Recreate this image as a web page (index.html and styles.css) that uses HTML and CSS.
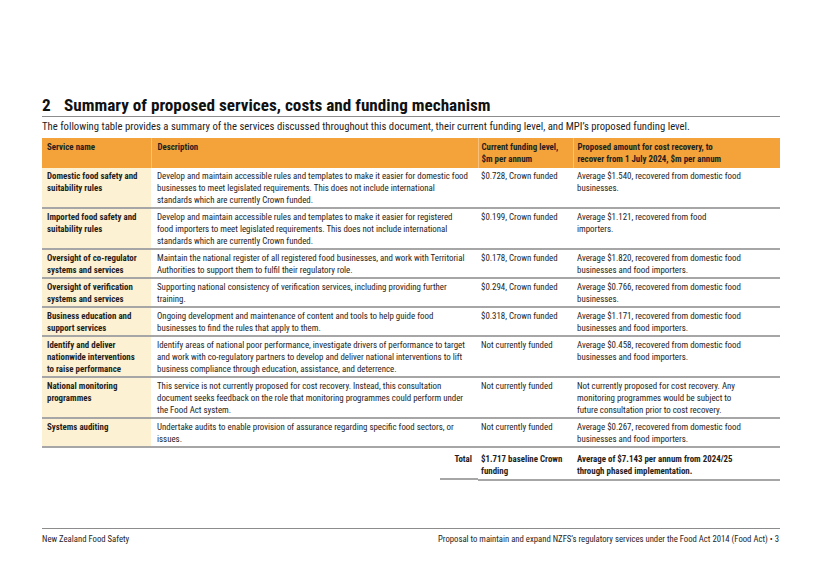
FILE: index.html
```html
<!DOCTYPE html>
<html>
<head>
<meta charset="utf-8">
<link rel="stylesheet" href="styles.css">
</head>
<body>
<div class="page">
  <h1 class="title"><span class="num">2</span>Summary of proposed services, costs and funding mechanism</h1>
  <p class="intro">The following table provides a summary of the services discussed throughout this document, their current funding level, and MPI’s proposed funding level.</p>
  <table class="tbl">
    <colgroup>
      <col class="c1"><col class="c2"><col class="c3"><col class="c4">
    </colgroup>
    <thead>
      <tr>
        <th>Service name</th>
        <th>Description</th>
        <th>Current funding level, $m per annum</th>
        <th>Proposed amount for cost recovery, to recover from 1 July 2024, $m per annum</th>
      </tr>
    </thead>
    <tbody>
      <tr>
        <td class="name">Domestic food safety and suitability rules</td>
        <td>Develop and maintain accessible rules and templates to make it easier for domestic food businesses to meet legislated requirements. This does not include international standards which are currently Crown funded.</td>
        <td>$0.728, Crown funded</td>
        <td>Average $1.540, recovered from domestic food businesses.</td>
      </tr>
      <tr>
        <td class="name">Imported food safety and suitability rules</td>
        <td>Develop and maintain accessible rules and templates to make it easier for registered food importers to meet legislated requirements. This does not include international standards which are currently Crown funded.</td>
        <td>$0.199, Crown funded</td>
        <td>Average $1.121, recovered from food importers.</td>
      </tr>
      <tr>
        <td class="name">Oversight of co-regulator systems and services</td>
        <td>Maintain the national register of all registered food businesses, and work with Territorial Authorities to support them to fulfil their regulatory role.</td>
        <td>$0.178, Crown funded</td>
        <td>Average $1.820, recovered from domestic food businesses and food importers.</td>
      </tr>
      <tr>
        <td class="name">Oversight of verification systems and services</td>
        <td>Supporting national consistency of verification services, including providing further training.</td>
        <td>$0.294, Crown funded</td>
        <td>Average $0.766, recovered from domestic food businesses.</td>
      </tr>
      <tr>
        <td class="name">Business education and support services</td>
        <td>Ongoing development and maintenance of content and tools to help guide food businesses to find the rules that apply to them.</td>
        <td>$0.318, Crown funded</td>
        <td>Average $1.171, recovered from domestic food businesses and food importers.</td>
      </tr>
      <tr>
        <td class="name">Identify and deliver nationwide interventions to raise performance</td>
        <td>Identify areas of national poor performance, investigate drivers of performance to target and work with co-regulatory partners to develop and deliver national interventions to lift business compliance through education, assistance, and deterrence.</td>
        <td>Not currently funded</td>
        <td>Average $0.458, recovered from domestic food businesses and food importers.</td>
      </tr>
      <tr>
        <td class="name">National monitoring programmes</td>
        <td>This service is not currently proposed for cost recovery. Instead, this consultation document seeks feedback on the role that monitoring programmes could perform under the Food Act system.</td>
        <td>Not currently funded</td>
        <td>Not currently proposed for cost recovery. Any monitoring programmes would be subject to future consultation prior to cost recovery.</td>
      </tr>
      <tr>
        <td class="name">Systems auditing</td>
        <td>Undertake audits to enable provision of assurance regarding specific food sectors, or issues.</td>
        <td>Not currently funded</td>
        <td>Average $0.267, recovered from domestic food businesses and food importers.</td>
      </tr>
      <tr class="total">
        <td class="blank"></td>
        <td class="label"><span>Total</span></td>
        <td class="b">$1.717 baseline Crown funding</td>
        <td class="b">Average of $7.143 per annum from 2024/25 through phased implementation.</td>
      </tr>
    </tbody>
  </table>
  <div class="footer">
    <span>New Zealand Food Safety</span>
    <span>Proposal to maintain and expand NZFS’s regulatory services under the Food Act 2014 (Food Act) • 3</span>
  </div>
</div>
</body>
</html>
```

FILE: styles.css
```css
html, body {
  margin: 0;
  padding: 0;
  background: #ffffff;
}
body {
  font-family: "Roboto Condensed", "Liberation Sans", Arial, sans-serif;
  color: #1e1e1e;
}
.page {
  width: 738px;
  margin-left: 42px;
  padding-top: 95px;
}
.title {
  margin: 0;
  font-size: 17.2px;
  font-weight: bold;
  line-height: 21px;
  border-bottom: 1px solid #8c8c8c;
  color: #111;
}
.title .num {
  display: inline-block;
  width: 22px;
}
.intro {
  margin: 3px 0 4px 0;
  font-size: 10.7px;
  line-height: 14px;
  white-space: nowrap;
}
.tbl {
  width: 738px;
  border-collapse: collapse;
  table-layout: fixed;
  font-size: 8.9px;
  line-height: 12px;
}
.c1 { width: 109px; }
.c2 { width: 327px; }
.c3 { width: 95px; }
.c4 { width: 207px; }
.tbl th {
  background: #f4a23a;
  text-align: left;
  vertical-align: top;
  font-weight: bold;
  padding: 3px 6px 3px 6px;
  border-left: 1px solid #f8c27c;
}
.tbl th:first-child { border-left: none; padding-left: 5px; }
.tbl th:nth-child(3) { padding-left: 3px; padding-right: 2px; }
.tbl th:nth-child(4) { padding-left: 4px; padding-right: 58px; }
.tbl td {
  vertical-align: top;
  padding: 2px 6px 1px 6px;
  border-bottom: 2px solid #a6a6a6;
}
.tbl td.name {
  background: #fdf1d3;
  font-weight: bold;
  padding-left: 5px;
  padding-right: 8px;
}
.tbl td:nth-child(2) { padding-right: 9px; }
.tbl td:nth-child(3) { padding-left: 3px; padding-right: 2px; }
.tbl td:nth-child(4) { padding-left: 4px; padding-right: 37px; }
.tbl .total td { padding-top: 5px; }
.tbl .total td.blank { border-bottom: none; }
.tbl .total td.label {
  text-align: right;
  font-weight: bold;
  padding: 0;
  border-bottom: none;
}
.tbl .total td.label span {
  display: block;
  margin-left: 289px;
  padding: 5px 6px 13px 0;
  border-bottom: 2px solid #a6a6a6;
}
.tbl .b { font-weight: bold; }
.footer {
  margin-top: 47px;
  border-top: 1px solid #8c8c8c;
  padding-top: 5px;
  display: flex;
  justify-content: space-between;
  font-size: 8.7px;
  line-height: 11px;
  padding-right: 1px;
}
```
